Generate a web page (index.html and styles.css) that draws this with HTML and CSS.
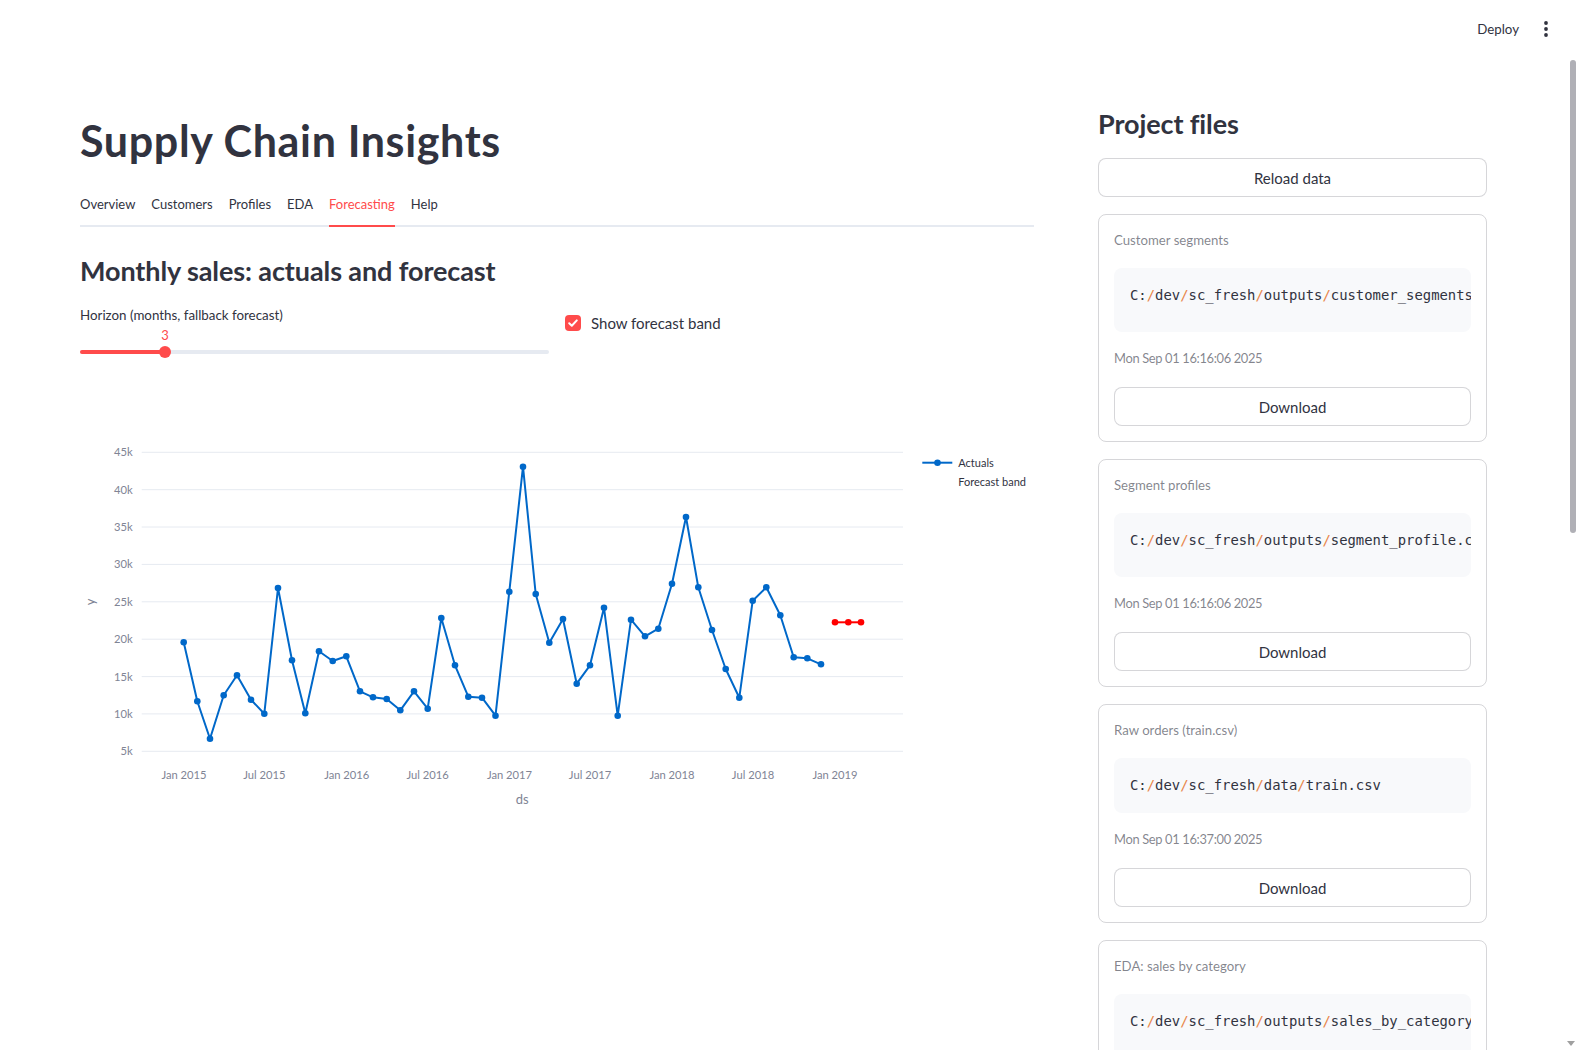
FILE: index.html
```html
<!DOCTYPE html>
<html lang="en">
<head>
<meta charset="utf-8">
<title>Supply Chain Insights</title>
<link rel="stylesheet" href="styles.css">
</head>
<body>
<header class="topbar">
  <span class="deploy">Deploy</span>
  <svg class="kebab" width="6" height="16" viewBox="0 0 6 16"><circle cx="3" cy="2" r="1.9" fill="#31333F"/><circle cx="3" cy="8" r="1.9" fill="#31333F"/><circle cx="3" cy="14" r="1.9" fill="#31333F"/></svg>
</header>
<div class="layout">
  <main class="main">
    <h1 class="title">Supply Chain Insights</h1>
    <nav class="tabs">
      <span class="tab">Overview</span>
      <span class="tab">Customers</span>
      <span class="tab">Profiles</span>
      <span class="tab">EDA</span>
      <span class="tab active">Forecasting</span>
      <span class="tab">Help</span>
    </nav>
    <h2 class="subheader">Monthly sales: actuals and forecast</h2>
    <div class="controls">
      <div class="col">
        <div class="label">Horizon (months, fallback forecast)</div>
        <div class="slider">
          <div class="track"><div class="fill"></div></div>
          <div class="thumb"></div>
          <div class="value">3</div>
        </div>
      </div>
      <div class="col col-check">
        <label class="check">
          <span class="box"><svg width="12" height="12" viewBox="0 0 12 12"><path d="M2.2 6.3 L4.8 8.8 L9.8 3.4" fill="none" stroke="#fff" stroke-width="2" stroke-linecap="round" stroke-linejoin="round"/></svg></span>
          <span>Show forecast band</span>
        </label>
      </div>
    </div>
    <svg class="chart" width="954" height="450" viewBox="80 390 954 450">
      <g class="grid" stroke="#e6eaf1" stroke-width="1">
        <line x1="141.7" x2="903" y1="452.3" y2="452.3"/>
        <line x1="141.7" x2="903" y1="489.7" y2="489.7"/>
        <line x1="141.7" x2="903" y1="527" y2="527"/>
        <line x1="141.7" x2="903" y1="564.4" y2="564.4"/>
        <line x1="141.7" x2="903" y1="601.8" y2="601.8"/>
        <line x1="141.7" x2="903" y1="639.2" y2="639.2"/>
        <line x1="141.7" x2="903" y1="676.6" y2="676.6"/>
        <line x1="141.7" x2="903" y1="713.9" y2="713.9"/>
        <line x1="141.7" x2="903" y1="751.3" y2="751.3"/>
      </g>
      <g class="ytick" text-anchor="end">
        <text x="132.7" y="456.3">45k</text>
        <text x="132.7" y="493.7">40k</text>
        <text x="132.7" y="531">35k</text>
        <text x="132.7" y="568.4">30k</text>
        <text x="132.7" y="605.8">25k</text>
        <text x="132.7" y="643.2">20k</text>
        <text x="132.7" y="680.6">15k</text>
        <text x="132.7" y="717.9">10k</text>
        <text x="132.7" y="755.3">5k</text>
      </g>
      <g class="xtick" text-anchor="middle">
        <text x="184" y="779">Jan 2015</text>
        <text x="264.3" y="779">Jul 2015</text>
        <text x="346.7" y="779">Jan 2016</text>
        <text x="427.7" y="779">Jul 2016</text>
        <text x="509.5" y="779">Jan 2017</text>
        <text x="590" y="779">Jul 2017</text>
        <text x="672" y="779">Jan 2018</text>
        <text x="753" y="779">Jul 2018</text>
        <text x="835" y="779">Jan 2019</text>
      </g>
      <text class="axis-title" x="522.3" y="804" text-anchor="middle">ds</text>
      <text class="axis-title" x="0" y="0" text-anchor="middle" transform="translate(94.5 602) rotate(-90)">y</text>
      <polyline fill="none" stroke="#0068c9" stroke-width="2" stroke-linejoin="round" points="183.7,642.3 197.3,701.3 210,738.7 223.7,695.3 237,675.3 251,699.7 264.3,713.7 278,588 292,660.3 305.3,713.3 319,651.3 332.7,661 346.3,656.3 360,691.3 373,697.3 386.7,699 400.3,710.3 414,691.3 427.7,708.7 441.3,618 455,665.3 468.3,696.7 482,697.7 495.5,715.7 509.3,591.7 523,466.7 535.7,594 549.3,642.7 563,619 576.7,683.7 590,665.3 604,607.7 617.7,715.7 631,619.7 645,636.3 658.3,628.7 672,583.7 686,517 698.3,587.3 712,630 725.7,669 739.3,697.7 752.7,600.7 766.3,587.3 780.3,615.3 793.7,657.3 807.3,658.3 821,664.3"/>
      <g fill="#0068c9">
        <circle cx="183.7" cy="642.3" r="3.3"/><circle cx="197.3" cy="701.3" r="3.3"/><circle cx="210" cy="738.7" r="3.3"/><circle cx="223.7" cy="695.3" r="3.3"/><circle cx="237" cy="675.3" r="3.3"/><circle cx="251" cy="699.7" r="3.3"/><circle cx="264.3" cy="713.7" r="3.3"/><circle cx="278" cy="588" r="3.3"/><circle cx="292" cy="660.3" r="3.3"/><circle cx="305.3" cy="713.3" r="3.3"/><circle cx="319" cy="651.3" r="3.3"/><circle cx="332.7" cy="661" r="3.3"/><circle cx="346.3" cy="656.3" r="3.3"/><circle cx="360" cy="691.3" r="3.3"/><circle cx="373" cy="697.3" r="3.3"/><circle cx="386.7" cy="699" r="3.3"/><circle cx="400.3" cy="710.3" r="3.3"/><circle cx="414" cy="691.3" r="3.3"/><circle cx="427.7" cy="708.7" r="3.3"/><circle cx="441.3" cy="618" r="3.3"/><circle cx="455" cy="665.3" r="3.3"/><circle cx="468.3" cy="696.7" r="3.3"/><circle cx="482" cy="697.7" r="3.3"/><circle cx="495.5" cy="715.7" r="3.3"/><circle cx="509.3" cy="591.7" r="3.3"/><circle cx="523" cy="466.7" r="3.3"/><circle cx="535.7" cy="594" r="3.3"/><circle cx="549.3" cy="642.7" r="3.3"/><circle cx="563" cy="619" r="3.3"/><circle cx="576.7" cy="683.7" r="3.3"/><circle cx="590" cy="665.3" r="3.3"/><circle cx="604" cy="607.7" r="3.3"/><circle cx="617.7" cy="715.7" r="3.3"/><circle cx="631" cy="619.7" r="3.3"/><circle cx="645" cy="636.3" r="3.3"/><circle cx="658.3" cy="628.7" r="3.3"/><circle cx="672" cy="583.7" r="3.3"/><circle cx="686" cy="517" r="3.3"/><circle cx="698.3" cy="587.3" r="3.3"/><circle cx="712" cy="630" r="3.3"/><circle cx="725.7" cy="669" r="3.3"/><circle cx="739.3" cy="697.7" r="3.3"/><circle cx="752.7" cy="600.7" r="3.3"/><circle cx="766.3" cy="587.3" r="3.3"/><circle cx="780.3" cy="615.3" r="3.3"/><circle cx="793.7" cy="657.3" r="3.3"/><circle cx="807.3" cy="658.3" r="3.3"/><circle cx="821" cy="664.3" r="3.3"/>
      </g>
      <polyline fill="none" stroke="#ff0000" stroke-width="2" points="835,622.3 848.3,622.3 861,622.3"/>
      <g fill="#ff0000">
        <circle cx="835" cy="622.3" r="3.3"/><circle cx="848.3" cy="622.3" r="3.3"/><circle cx="861" cy="622.3" r="3.3"/>
      </g>
      <line x1="922.3" x2="952.3" y1="462.7" y2="462.7" stroke="#0068c9" stroke-width="2"/>
      <circle cx="937.5" cy="462.7" r="3.3" fill="#0068c9"/>
      <text class="legend" x="958.3" y="466.6">Actuals</text>
      <text class="legend" x="958.3" y="486.2">Forecast band</text>
    </svg>
  </main>
  <aside class="side">
    <h2 class="side-title">Project files</h2>
    <button class="btn reload">Reload data</button>
    <section class="card">
      <div class="card-label">Customer segments</div>
      <pre class="code overflow">C:<span class="sl">/</span>dev<span class="sl">/</span>sc_fresh<span class="sl">/</span>outputs<span class="sl">/</span>customer_segments.csv</pre>
      <div class="date">Mon Sep 01 16:16:06 2025</div>
      <button class="btn">Download</button>
    </section>
    <section class="card">
      <div class="card-label">Segment profiles</div>
      <pre class="code overflow">C:<span class="sl">/</span>dev<span class="sl">/</span>sc_fresh<span class="sl">/</span>outputs<span class="sl">/</span>segment_profile.csv</pre>
      <div class="date">Mon Sep 01 16:16:06 2025</div>
      <button class="btn">Download</button>
    </section>
    <section class="card">
      <div class="card-label">Raw orders (train.csv)</div>
      <pre class="code">C:<span class="sl">/</span>dev<span class="sl">/</span>sc_fresh<span class="sl">/</span>data<span class="sl">/</span>train.csv</pre>
      <div class="date">Mon Sep 01 16:37:00 2025</div>
      <button class="btn">Download</button>
    </section>
    <section class="card">
      <div class="card-label">EDA: sales by category</div>
      <pre class="code overflow">C:<span class="sl">/</span>dev<span class="sl">/</span>sc_fresh<span class="sl">/</span>outputs<span class="sl">/</span>sales_by_category.csv</pre>
      <div class="date">Mon Sep 01 16:16:06 2025</div>
      <button class="btn">Download</button>
    </section>
  </aside>
</div>
<div class="scrollbar"></div>
<div class="scroll-arrow"></div>
</body>
</html>
```
FILE: styles.css
```css
html, body {
  margin: 0;
  height: 100%;
  overflow: hidden;
  background: #ffffff;
}
body {
  font-family: Lato, "Noto Sans", sans-serif;
  color: #31333F;
}
.topbar {
  height: 58px;
  display: flex;
  align-items: center;
  justify-content: flex-end;
  gap: 24px;
  padding-right: 29px;
}
.deploy {
  font-size: 13.3px;
  line-height: 20px;
}
.kebab { display: block; }
.layout {
  display: flex;
  gap: 64px;
  padding: 0 91px 0 80px;
  align-items: flex-start;
}
.main { width: 954px; flex: none; }
.side { width: 389px; flex: none; }
.title {
  margin: 56.5px 0 0;
  font-size: 43px;
  line-height: 51px;
  font-weight: 700;
  letter-spacing: 0.65px;
}
.tabs {
  margin-top: 20px;
  display: flex;
  gap: 16px;
  border-bottom: 2px solid #e6eaf1;
  height: 39px;
}
.tab {
  font-size: 13px;
  line-height: 37px;
  height: 37px;
  border-bottom: 2px solid transparent;
  margin-bottom: -2px;
  padding-bottom: 2px;
}
.tab.active {
  color: #ff4b4b;
  border-bottom-color: #ff4b4b;
}
.subheader {
  margin: 26.7px 0 0;
  font-size: 27px;
  line-height: 36px;
  font-weight: 700;
  letter-spacing: -0.1px;
}
.controls {
  margin-top: 15.8px;
  display: flex;
  gap: 16px;
}
.col { flex: 1 1 0; }
.label {
  font-size: 13.35px;
  line-height: 20px;
}
.slider {
  position: relative;
  height: 40px;
}
.track {
  position: absolute;
  left: 0;
  right: 0;
  top: 25px;
  height: 4px;
  border-radius: 2px;
  background: #e6eaf1;
}
.fill {
  width: 85px;
  height: 100%;
  border-radius: 2px;
  background: #ff4b4b;
}
.thumb {
  position: absolute;
  left: 79px;
  top: 21px;
  width: 12px;
  height: 12px;
  border-radius: 50%;
  background: #ff4b4b;
}
.value {
  position: absolute;
  left: 85px;
  top: 1px;
  transform: translateX(-50%);
  font-size: 13px;
  line-height: 18px;
  color: #ff4b4b;
}
.col-check { padding-top: 6.2px; }
.check {
  display: flex;
  align-items: center;
  gap: 10px;
  font-size: 15px;
  line-height: 24px;
}
.box {
  width: 16px;
  height: 16px;
  border-radius: 4px;
  background: #ff4b4b;
  display: flex;
  align-items: center;
  justify-content: center;
}
.chart {
  display: block;
  margin-top: 25.3px;
  font-family: Lato, "Noto Sans", sans-serif;
}
.ytick text, .xtick text {
  font-size: 11.2px;
  fill: #808495;
}
.axis-title {
  font-size: 13px;
  fill: #808495;
}
.legend {
  font-size: 11px;
  fill: #31333F;
}
.side-title {
  margin: 48.2px 0 0;
  font-size: 27px;
  line-height: 36px;
  font-weight: 700;
  letter-spacing: -0.1px;
}
.btn {
  display: block;
  width: 100%;
  height: 38.7px;
  border: 1px solid rgba(49, 51, 63, 0.2);
  border-radius: 8px;
  background: #ffffff;
  font-family: Lato, "Noto Sans", sans-serif;
  font-size: 15px;
  color: #31333F;
  padding: 0;
}
.reload {
  margin-top: 16px;
  height: 39px;
}
.card {
  margin-top: 17.3px;
  border: 1px solid rgba(49, 51, 63, 0.2);
  border-radius: 8px;
  padding: 15px;
  display: flex;
  flex-direction: column;
  gap: 16px;
}
.card-label {
  height: 22px;
  font-size: 13.2px;
  line-height: 20px;
  color: rgba(49, 51, 63, 0.6);
}
.code {
  margin: 0;
  padding: 16px 16px;
  background: #f8f9fb;
  border-radius: 8px;
  font-family: "DejaVu Sans Mono", "Liberation Mono", monospace;
  font-size: 13.9px;
  line-height: 22.4px;
  color: #31333F;
  white-space: pre;
  overflow: hidden;
}
.code.overflow { padding-bottom: 25px; }
.sl { color: #e8864a; }
.date {
  height: 23.6px;
  font-size: 12.9px;
  line-height: 21px;
  letter-spacing: -0.35px;
  color: rgba(49, 51, 63, 0.6);
}
.scrollbar {
  position: fixed;
  left: 1570px;
  top: 60px;
  width: 6px;
  height: 473px;
  border-radius: 3px;
  background: #b0b0b6;
}
.scroll-arrow {
  position: fixed;
  left: 1567px;
  top: 1041px;
  width: 0;
  height: 0;
  border-left: 4px solid transparent;
  border-right: 4px solid transparent;
  border-top: 5px solid #a0a0a0;
}
```
